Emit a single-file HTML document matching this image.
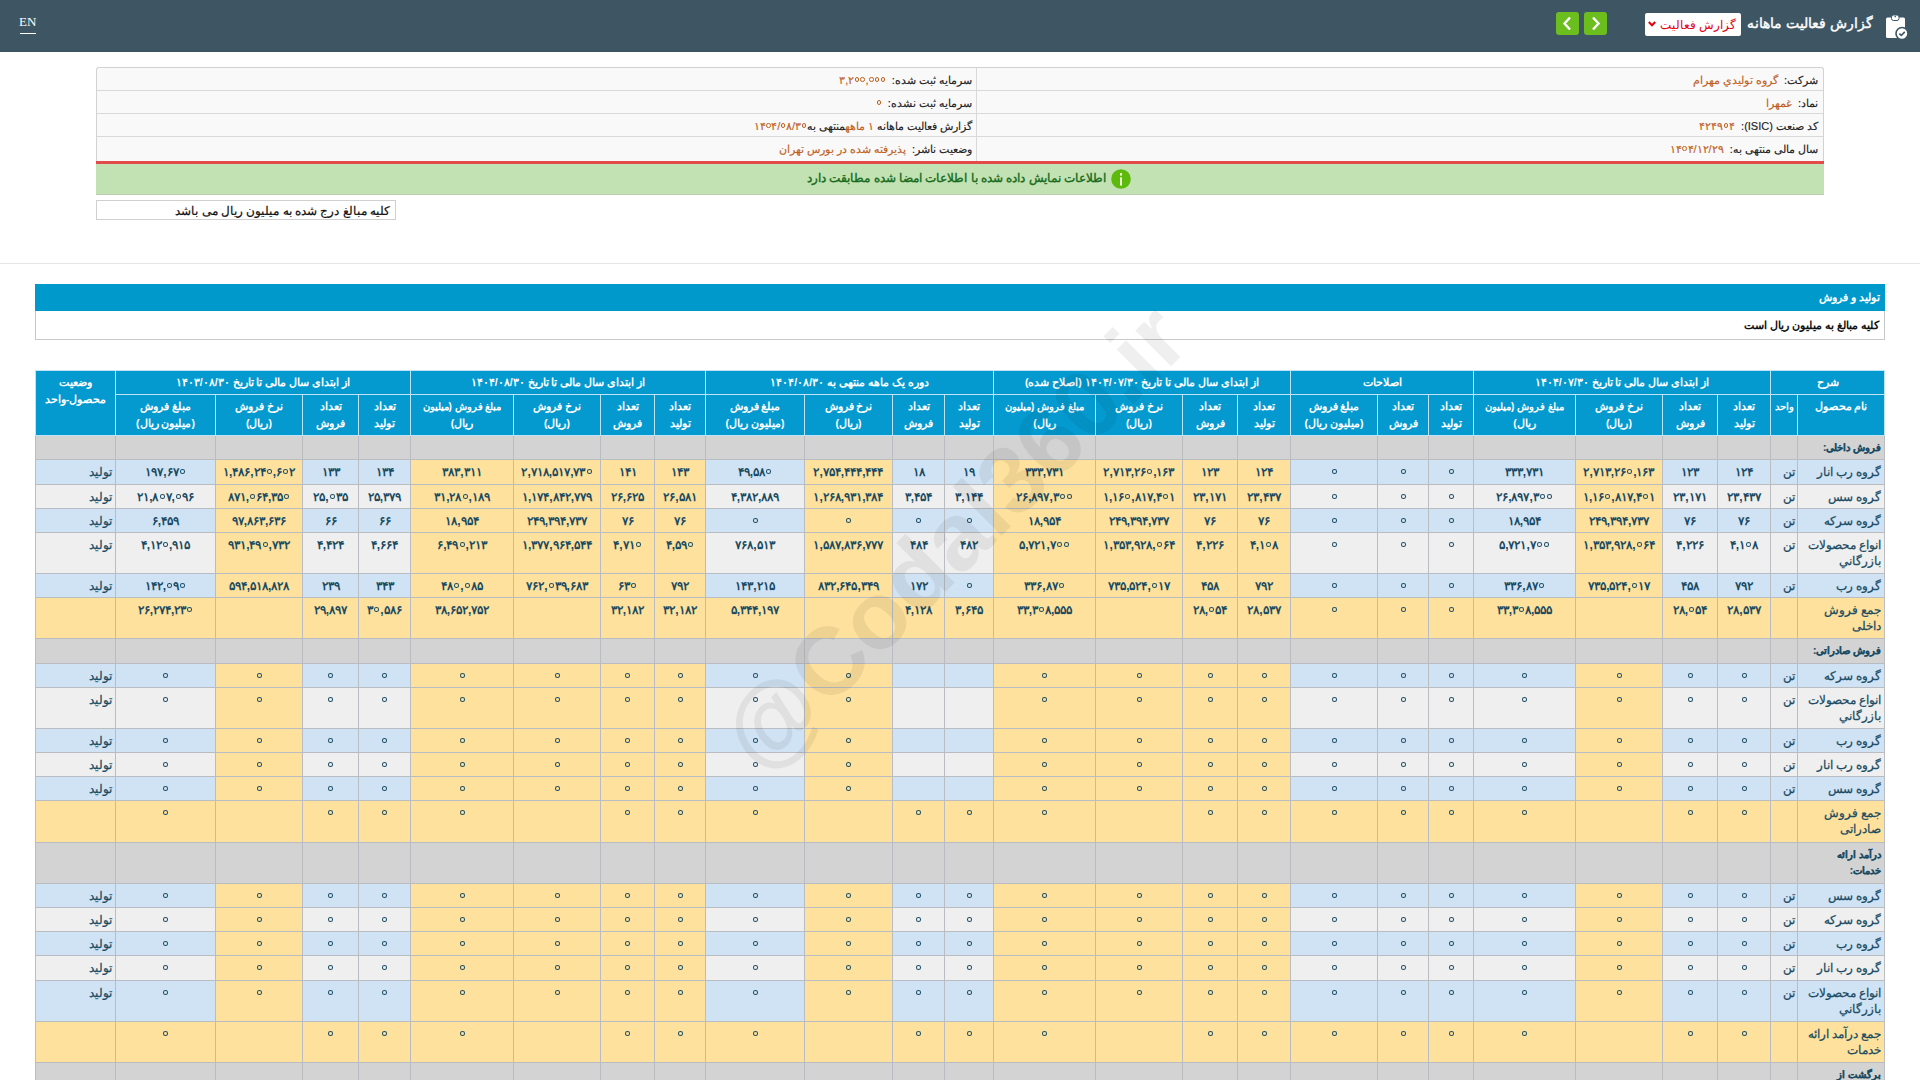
<!DOCTYPE html>
<html lang="fa"><head><meta charset="utf-8"><title>Codal</title>
<style>
*{box-sizing:border-box;margin:0;padding:0}
html,body{width:1920px;height:1080px;overflow:hidden;background:#fff;font-family:"Liberation Sans",sans-serif;}
.a{position:absolute}
.c{position:absolute;overflow:hidden;color:#1a4b62;font-size:12px;line-height:16px;text-align:center;padding-top:4px;white-space:nowrap;direction:rtl}
.c.d{font-weight:bold}
.c.h1{color:#fff;font-weight:bold;font-size:10.5px;padding-top:3px}
.c.h2{color:#fff;font-weight:bold;font-size:10.5px;padding-top:3px;line-height:17px}
.c.nm{text-align:right;padding-right:3px;font-size:11.5px;-webkit-text-stroke:0.25px currentColor}
.c.u{text-align:right;padding-right:2px;font-size:12px;-webkit-text-stroke:0.25px currentColor}
.c.g{font-weight:bold;font-size:10px;-webkit-text-stroke:0.2px currentColor}
.n{direction:ltr;unicode-bidi:isolate;display:inline-block}
.o0{display:inline-block;width:5px;height:4.6px;border:1.5px solid currentColor;border-radius:50%;margin:0 1px;vertical-align:2.5px}
.fa{direction:rtl;white-space:nowrap}
.inf{direction:rtl;text-align:right;font-size:11px;line-height:16px;white-space:nowrap;color:#222;-webkit-text-stroke:0.15px currentColor}
.inf .vl{color:#c0601c}
.inf .lb{color:#222}
.o0.s{width:4.5px;height:4.5px;border-width:1.4px;vertical-align:2.5px;margin:0 0.6px}
.wm{font-family:"Liberation Sans",sans-serif;font-weight:bold;font-size:93px;line-height:110px;color:rgba(0,0,0,0.062);text-align:center;white-space:nowrap;pointer-events:none}
</style></head><body>

<div class="a" style="left:0;top:0;width:1920px;height:52px;background:#3e5664"></div>
<div class="a" style="left:19px;top:14px;font-family:'Liberation Serif',serif;font-size:13px;color:#fff;line-height:16px">EN</div>
<div class="a" style="left:20px;top:33px;width:16px;height:1px;background:#fff"></div>
<svg class="a" style="left:1882px;top:12px" width="30" height="30" viewBox="0 0 30 30">
  <rect x="4" y="5.6" width="19" height="20.5" rx="1.5" fill="#fff"/>
  <rect x="9.5" y="3" width="7.5" height="5.5" rx="2" fill="#fff" stroke="#3e5664" stroke-width="1"/>
  <circle cx="13.2" cy="4.6" r="0.8" fill="#3e5664"/>
  <circle cx="20" cy="21.5" r="6" fill="#fff" stroke="#3e5664" stroke-width="1.6"/>
  <path d="M17.3 21.6 L19.3 23.3 L22.8 19.9" fill="none" stroke="#3e5664" stroke-width="1.6"/>
</svg>
<div class="a fa" style="left:1700px;top:13px;width:173px;text-align:right;color:#fff;font-size:14px;line-height:20px;-webkit-text-stroke:0.4px #fff">گزارش فعالیت ماهانه</div>
<div class="a" style="left:1645px;top:13px;width:96px;height:23px;background:#fff;border-radius:2px"></div>
<div class="a fa" style="left:1660px;top:16px;width:76px;text-align:right;color:#e3000f;font-size:12px;line-height:18px">گزارش فعالیت</div>
<svg class="a" style="left:1647px;top:19px" width="10" height="10" viewBox="0 0 10 10"><path d="M1.8 3 L5 6.3 L8.2 3" fill="none" stroke="#e3000f" stroke-width="2"/></svg>
<div class="a" style="left:1556px;top:12px;width:23px;height:23px;background:#6cbe1f;border-radius:3px"></div>
<div class="a" style="left:1584px;top:12px;width:23px;height:23px;background:#6cbe1f;border-radius:3px"></div>
<svg class="a" style="left:1556px;top:12px" width="23" height="23" viewBox="0 0 23 23"><path d="M14 5.5 L8.5 11.5 L14 17.5" fill="none" stroke="#fff" stroke-width="2.4"/></svg>
<svg class="a" style="left:1584px;top:12px" width="23" height="23" viewBox="0 0 23 23"><path d="M9 5.5 L14.5 11.5 L9 17.5" fill="none" stroke="#fff" stroke-width="2.4"/></svg>

<div class="a" style="left:96px;top:67px;width:1728px;height:95px;background:#f9f9f9;border:1px solid #d2d2d2;border-bottom:none;border-radius:3px 3px 0 0"></div>
<div class="a" style="left:97px;top:90px;width:1726px;height:1px;background:#d9d9d9"></div>
<div class="a" style="left:97px;top:113px;width:1726px;height:1px;background:#d9d9d9"></div>
<div class="a" style="left:97px;top:136px;width:1726px;height:1px;background:#d9d9d9"></div>
<div class="a" style="left:976px;top:68px;width:1px;height:93px;background:#d9d9d9"></div>

<div class="a inf" style="left:980px;top:72px;width:838px"><span class="lb">شرکت:</span>&nbsp; <span class="vl">گروه توليدي مهرام</span></div>
<div class="a inf" style="left:980px;top:95px;width:838px"><span class="lb">نماد:</span>&nbsp; <span class="vl">غمهرا</span></div>
<div class="a inf" style="left:980px;top:118px;width:838px"><span class="lb">کد صنعت (ISIC):</span>&nbsp; <span class="vl n">۴۲۴۹<i class="o0 s"></i>۴</span></div>
<div class="a inf" style="left:980px;top:141px;width:838px"><span class="lb">سال مالی منتهی به:</span>&nbsp; <span class="vl n">۱۴<i class="o0 s"></i>۴/۱۲/۲۹</span></div>
<div class="a inf" style="left:100px;top:72px;width:872px"><span class="lb">سرمایه ثبت شده:</span>&nbsp; <span class="vl n">۳,۲<i class="o0 s"></i><i class="o0 s"></i>,<i class="o0 s"></i><i class="o0 s"></i><i class="o0 s"></i></span></div>
<div class="a inf" style="left:100px;top:95px;width:872px"><span class="lb">سرمایه ثبت نشده:</span>&nbsp; <span class="vl n"><i class="o0 s"></i></span></div>
<div class="a inf" style="left:100px;top:118px;width:872px"><span class="lb">گزارش فعالیت ماهانه <span class="vl">۱ ماهه</span>منتهی به<span class="vl n">۱۴<i class="o0 s"></i>۴/<i class="o0 s"></i>۸/۳<i class="o0 s"></i></span></span></div>
<div class="a inf" style="left:100px;top:141px;width:872px"><span class="lb">وضعیت ناشر:</span>&nbsp; <span class="vl">پذیرفته شده در بورس تهران</span></div>

<div class="a" style="left:96px;top:161px;width:1728px;height:3px;background:#e34a4a"></div>
<div class="a" style="left:96px;top:164px;width:1728px;height:31px;background:#c3e2b4;border-bottom:1px solid #b9cdb3"></div>
<div class="a fa" style="left:700px;top:170px;width:406px;text-align:right;color:#176c1c;font-size:12px;line-height:17px;-webkit-text-stroke:0.4px #176c1c">اطلاعات نمایش داده شده با اطلاعات امضا شده مطابقت دارد</div>
<svg class="a" style="left:1110px;top:168px" width="22" height="22" viewBox="0 0 22 22"><circle cx="11" cy="11" r="9.8" fill="#5db90c"/><rect x="10" y="5" width="2" height="2.6" fill="#eaffd0"/><rect x="10" y="9.3" width="2" height="8.2" fill="#eaffd0"/></svg>

<div class="a" style="left:96px;top:200px;width:300px;height:20px;border:1px solid #d0d0d0;background:#fff"></div>
<div class="a fa" style="left:100px;top:203px;width:290px;text-align:right;color:#111;font-size:12px;line-height:16px;-webkit-text-stroke:0.2px #111">کلیه مبالغ درج شده به میلیون ریال می باشد</div>

<div class="a" style="left:0;top:263px;width:1920px;height:1px;background:#e6e6e6"></div>

<div class="a" style="left:35px;top:284px;width:1850px;height:27px;background:#0099cc"></div>
<div class="a fa" style="left:500px;top:289px;width:1380px;text-align:right;color:#fff;font-size:11px;line-height:17px;font-weight:bold">تولید و فروش</div>
<div class="a" style="left:35px;top:311px;width:1850px;height:29px;border:1px solid #c9c9c9;border-top:none;background:#fff"></div>
<div class="a fa" style="left:500px;top:317px;width:1379px;text-align:right;color:#111;font-size:11px;line-height:17px;font-weight:bold">کلیه مبالغ به میلیون ریال است</div>

<div class="a" style="left:35px;top:370px;width:1850px;height:710px;background:#b9bdc2"></div>
<div class="a" style="left:35px;top:370px;width:1850px;height:66px;background:#bfe3f3"></div>
<div class="c h1" style="left:1771px;top:371px;width:113px;height:23px;background:#049ad0">شرح</div>
<div class="c h1" style="left:1474px;top:371px;width:296px;height:23px;background:#049ad0">از ابتدای سال مالی تا تاریخ ۱۴۰۴/۰۷/۳۰</div>
<div class="c h1" style="left:1291px;top:371px;width:182px;height:23px;background:#049ad0">اصلاحات</div>
<div class="c h1" style="left:994px;top:371px;width:296px;height:23px;background:#049ad0">از ابتدای سال مالی تا تاریخ ۱۴۰۴/۰۷/۳۰ (اصلاح شده)</div>
<div class="c h1" style="left:706px;top:371px;width:287px;height:23px;background:#049ad0">دوره یک ماهه منتهی به ۱۴۰۴/۰۸/۳۰</div>
<div class="c h1" style="left:411px;top:371px;width:294px;height:23px;background:#049ad0">از ابتدای سال مالی تا تاریخ ۱۴۰۴/۰۸/۳۰</div>
<div class="c h1" style="left:116px;top:371px;width:294px;height:23px;background:#049ad0">از ابتدای سال مالی تا تاریخ ۱۴۰۳/۰۸/۳۰</div>
<div class="c h2" style="left:36px;top:371px;width:79px;height:64px;background:#049ad0">وضعیت<br>محصول-واحد</div>
<div class="c h2" style="left:1798px;top:395px;width:86px;height:40px;background:#049ad0">نام محصول</div>
<div class="c h2" style="left:1771px;top:395px;width:26px;height:40px;background:#049ad0"><span style="font-size:10px">واحد</span></div>
<div class="c h2" style="left:1718px;top:395px;width:52px;height:40px;background:#049ad0">تعداد<br>تولید</div>
<div class="c h2" style="left:1663px;top:395px;width:54px;height:40px;background:#049ad0">تعداد<br>فروش</div>
<div class="c h2" style="left:1576px;top:395px;width:86px;height:40px;background:#049ad0">نرخ فروش<br>(ریال)</div>
<div class="c h2" style="left:1474px;top:395px;width:101px;height:40px;background:#049ad0"><span style="font-size:10px">مبلغ فروش (میلیون</span><br>ریال)</div>
<div class="c h2" style="left:1238px;top:395px;width:52px;height:40px;background:#049ad0">تعداد<br>تولید</div>
<div class="c h2" style="left:1183px;top:395px;width:54px;height:40px;background:#049ad0">تعداد<br>فروش</div>
<div class="c h2" style="left:1096px;top:395px;width:86px;height:40px;background:#049ad0">نرخ فروش<br>(ریال)</div>
<div class="c h2" style="left:994px;top:395px;width:101px;height:40px;background:#049ad0"><span style="font-size:10px">مبلغ فروش (میلیون</span><br>ریال)</div>
<div class="c h2" style="left:945px;top:395px;width:48px;height:40px;background:#049ad0">تعداد<br>تولید</div>
<div class="c h2" style="left:893px;top:395px;width:51px;height:40px;background:#049ad0">تعداد<br>فروش</div>
<div class="c h2" style="left:805px;top:395px;width:87px;height:40px;background:#049ad0">نرخ فروش<br>(ریال)</div>
<div class="c h2" style="left:706px;top:395px;width:98px;height:40px;background:#049ad0">مبلغ فروش<br>(میلیون ریال)</div>
<div class="c h2" style="left:655px;top:395px;width:50px;height:40px;background:#049ad0">تعداد<br>تولید</div>
<div class="c h2" style="left:601px;top:395px;width:53px;height:40px;background:#049ad0">تعداد<br>فروش</div>
<div class="c h2" style="left:514px;top:395px;width:86px;height:40px;background:#049ad0">نرخ فروش<br>(ریال)</div>
<div class="c h2" style="left:411px;top:395px;width:102px;height:40px;background:#049ad0"><span style="font-size:10px">مبلغ فروش (میلیون</span><br>ریال)</div>
<div class="c h2" style="left:359px;top:395px;width:51px;height:40px;background:#049ad0">تعداد<br>تولید</div>
<div class="c h2" style="left:303px;top:395px;width:55px;height:40px;background:#049ad0">تعداد<br>فروش</div>
<div class="c h2" style="left:216px;top:395px;width:86px;height:40px;background:#049ad0">نرخ فروش<br>(ریال)</div>
<div class="c h2" style="left:116px;top:395px;width:99px;height:40px;background:#049ad0">مبلغ فروش<br>(میلیون ریال)</div>
<div class="c h2" style="left:1429px;top:395px;width:44px;height:40px;background:#049ad0">تعداد<br>تولید</div>
<div class="c h2" style="left:1378px;top:395px;width:50px;height:40px;background:#049ad0">تعداد<br>فروش</div>
<div class="c h2" style="left:1291px;top:395px;width:86px;height:40px;background:#049ad0">مبلغ فروش<br>(میلیون ریال)</div>
<div class="c " style="left:36px;top:436px;width:79px;height:23px;background:#d3d3d3"></div>
<div class="c " style="left:116px;top:436px;width:99px;height:23px;background:#d3d3d3"></div>
<div class="c " style="left:216px;top:436px;width:86px;height:23px;background:#d3d3d3"></div>
<div class="c " style="left:303px;top:436px;width:55px;height:23px;background:#d3d3d3"></div>
<div class="c " style="left:359px;top:436px;width:51px;height:23px;background:#d3d3d3"></div>
<div class="c " style="left:411px;top:436px;width:102px;height:23px;background:#d3d3d3"></div>
<div class="c " style="left:514px;top:436px;width:86px;height:23px;background:#d3d3d3"></div>
<div class="c " style="left:601px;top:436px;width:53px;height:23px;background:#d3d3d3"></div>
<div class="c " style="left:655px;top:436px;width:50px;height:23px;background:#d3d3d3"></div>
<div class="c " style="left:706px;top:436px;width:98px;height:23px;background:#d3d3d3"></div>
<div class="c " style="left:805px;top:436px;width:87px;height:23px;background:#d3d3d3"></div>
<div class="c " style="left:893px;top:436px;width:51px;height:23px;background:#d3d3d3"></div>
<div class="c " style="left:945px;top:436px;width:48px;height:23px;background:#d3d3d3"></div>
<div class="c " style="left:994px;top:436px;width:101px;height:23px;background:#d3d3d3"></div>
<div class="c " style="left:1096px;top:436px;width:86px;height:23px;background:#d3d3d3"></div>
<div class="c " style="left:1183px;top:436px;width:54px;height:23px;background:#d3d3d3"></div>
<div class="c " style="left:1238px;top:436px;width:52px;height:23px;background:#d3d3d3"></div>
<div class="c " style="left:1291px;top:436px;width:86px;height:23px;background:#d3d3d3"></div>
<div class="c " style="left:1378px;top:436px;width:50px;height:23px;background:#d3d3d3"></div>
<div class="c " style="left:1429px;top:436px;width:44px;height:23px;background:#d3d3d3"></div>
<div class="c " style="left:1474px;top:436px;width:101px;height:23px;background:#d3d3d3"></div>
<div class="c " style="left:1576px;top:436px;width:86px;height:23px;background:#d3d3d3"></div>
<div class="c " style="left:1663px;top:436px;width:54px;height:23px;background:#d3d3d3"></div>
<div class="c " style="left:1718px;top:436px;width:52px;height:23px;background:#d3d3d3"></div>
<div class="c " style="left:1771px;top:436px;width:26px;height:23px;background:#d3d3d3"></div>
<div class="c nm g" style="left:1798px;top:436px;width:86px;height:23px;background:#d3d3d3">فروش داخلی:</div>
<div class="c nm z" style="left:36px;top:460px;width:79px;height:24px;background:#d0e3f5">تولید</div>
<div class="c d" style="left:116px;top:460px;width:99px;height:24px;background:#d0e3f5"><span class="n">۱۹۷,۶۷<i class="o0"></i></span></div>
<div class="c d" style="left:216px;top:460px;width:86px;height:24px;background:#fde19c"><span class="n">۱,۴۸۶,۲۴<i class="o0"></i>,۶<i class="o0"></i>۲</span></div>
<div class="c d" style="left:303px;top:460px;width:55px;height:24px;background:#d0e3f5"><span class="n">۱۳۳</span></div>
<div class="c d" style="left:359px;top:460px;width:51px;height:24px;background:#d0e3f5"><span class="n">۱۳۴</span></div>
<div class="c d" style="left:411px;top:460px;width:102px;height:24px;background:#fde19c"><span class="n">۳۸۳,۳۱۱</span></div>
<div class="c d" style="left:514px;top:460px;width:86px;height:24px;background:#fde19c"><span class="n">۲,۷۱۸,۵۱۷,۷۳<i class="o0"></i></span></div>
<div class="c d" style="left:601px;top:460px;width:53px;height:24px;background:#fde19c"><span class="n">۱۴۱</span></div>
<div class="c d" style="left:655px;top:460px;width:50px;height:24px;background:#fde19c"><span class="n">۱۴۳</span></div>
<div class="c d" style="left:706px;top:460px;width:98px;height:24px;background:#d0e3f5"><span class="n">۴۹,۵۸<i class="o0"></i></span></div>
<div class="c d" style="left:805px;top:460px;width:87px;height:24px;background:#fde19c"><span class="n">۲,۷۵۴,۴۴۴,۴۴۴</span></div>
<div class="c d" style="left:893px;top:460px;width:51px;height:24px;background:#d0e3f5"><span class="n">۱۸</span></div>
<div class="c d" style="left:945px;top:460px;width:48px;height:24px;background:#d0e3f5"><span class="n">۱۹</span></div>
<div class="c d" style="left:994px;top:460px;width:101px;height:24px;background:#fde19c"><span class="n">۳۳۳,۷۳۱</span></div>
<div class="c d" style="left:1096px;top:460px;width:86px;height:24px;background:#fde19c"><span class="n">۲,۷۱۳,۲۶<i class="o0"></i>,۱۶۳</span></div>
<div class="c d" style="left:1183px;top:460px;width:54px;height:24px;background:#fde19c"><span class="n">۱۲۳</span></div>
<div class="c d" style="left:1238px;top:460px;width:52px;height:24px;background:#fde19c"><span class="n">۱۲۴</span></div>
<div class="c d" style="left:1291px;top:460px;width:86px;height:24px;background:#d0e3f5"><span class="n"><i class="o0"></i></span></div>
<div class="c d" style="left:1378px;top:460px;width:50px;height:24px;background:#d0e3f5"><span class="n"><i class="o0"></i></span></div>
<div class="c d" style="left:1429px;top:460px;width:44px;height:24px;background:#d0e3f5"><span class="n"><i class="o0"></i></span></div>
<div class="c d" style="left:1474px;top:460px;width:101px;height:24px;background:#d0e3f5"><span class="n">۳۳۳,۷۳۱</span></div>
<div class="c d" style="left:1576px;top:460px;width:86px;height:24px;background:#fde19c"><span class="n">۲,۷۱۳,۲۶<i class="o0"></i>,۱۶۳</span></div>
<div class="c d" style="left:1663px;top:460px;width:54px;height:24px;background:#d0e3f5"><span class="n">۱۲۳</span></div>
<div class="c d" style="left:1718px;top:460px;width:52px;height:24px;background:#d0e3f5"><span class="n">۱۲۴</span></div>
<div class="c u" style="left:1771px;top:460px;width:26px;height:24px;background:#d0e3f5">تن</div>
<div class="c nm" style="left:1798px;top:460px;width:86px;height:24px;background:#d0e3f5">گروه رب انار</div>
<div class="c nm z" style="left:36px;top:485px;width:79px;height:23px;background:#efefef">تولید</div>
<div class="c d" style="left:116px;top:485px;width:99px;height:23px;background:#efefef"><span class="n">۲۱,۸<i class="o0"></i>۷,<i class="o0"></i>۹۶</span></div>
<div class="c d" style="left:216px;top:485px;width:86px;height:23px;background:#fde19c"><span class="n">۸۷۱,<i class="o0"></i>۶۴,۳۵<i class="o0"></i></span></div>
<div class="c d" style="left:303px;top:485px;width:55px;height:23px;background:#efefef"><span class="n">۲۵,<i class="o0"></i>۳۵</span></div>
<div class="c d" style="left:359px;top:485px;width:51px;height:23px;background:#efefef"><span class="n">۲۵,۳۷۹</span></div>
<div class="c d" style="left:411px;top:485px;width:102px;height:23px;background:#fde19c"><span class="n">۳۱,۲۸<i class="o0"></i>,۱۸۹</span></div>
<div class="c d" style="left:514px;top:485px;width:86px;height:23px;background:#fde19c"><span class="n">۱,۱۷۴,۸۴۲,۷۷۹</span></div>
<div class="c d" style="left:601px;top:485px;width:53px;height:23px;background:#fde19c"><span class="n">۲۶,۶۲۵</span></div>
<div class="c d" style="left:655px;top:485px;width:50px;height:23px;background:#fde19c"><span class="n">۲۶,۵۸۱</span></div>
<div class="c d" style="left:706px;top:485px;width:98px;height:23px;background:#efefef"><span class="n">۴,۳۸۲,۸۸۹</span></div>
<div class="c d" style="left:805px;top:485px;width:87px;height:23px;background:#fde19c"><span class="n">۱,۲۶۸,۹۳۱,۳۸۴</span></div>
<div class="c d" style="left:893px;top:485px;width:51px;height:23px;background:#efefef"><span class="n">۳,۴۵۴</span></div>
<div class="c d" style="left:945px;top:485px;width:48px;height:23px;background:#efefef"><span class="n">۳,۱۴۴</span></div>
<div class="c d" style="left:994px;top:485px;width:101px;height:23px;background:#fde19c"><span class="n">۲۶,۸۹۷,۳<i class="o0"></i><i class="o0"></i></span></div>
<div class="c d" style="left:1096px;top:485px;width:86px;height:23px;background:#fde19c"><span class="n">۱,۱۶<i class="o0"></i>,۸۱۷,۴<i class="o0"></i>۱</span></div>
<div class="c d" style="left:1183px;top:485px;width:54px;height:23px;background:#fde19c"><span class="n">۲۳,۱۷۱</span></div>
<div class="c d" style="left:1238px;top:485px;width:52px;height:23px;background:#fde19c"><span class="n">۲۳,۴۳۷</span></div>
<div class="c d" style="left:1291px;top:485px;width:86px;height:23px;background:#efefef"><span class="n"><i class="o0"></i></span></div>
<div class="c d" style="left:1378px;top:485px;width:50px;height:23px;background:#efefef"><span class="n"><i class="o0"></i></span></div>
<div class="c d" style="left:1429px;top:485px;width:44px;height:23px;background:#efefef"><span class="n"><i class="o0"></i></span></div>
<div class="c d" style="left:1474px;top:485px;width:101px;height:23px;background:#efefef"><span class="n">۲۶,۸۹۷,۳<i class="o0"></i><i class="o0"></i></span></div>
<div class="c d" style="left:1576px;top:485px;width:86px;height:23px;background:#fde19c"><span class="n">۱,۱۶<i class="o0"></i>,۸۱۷,۴<i class="o0"></i>۱</span></div>
<div class="c d" style="left:1663px;top:485px;width:54px;height:23px;background:#efefef"><span class="n">۲۳,۱۷۱</span></div>
<div class="c d" style="left:1718px;top:485px;width:52px;height:23px;background:#efefef"><span class="n">۲۳,۴۳۷</span></div>
<div class="c u" style="left:1771px;top:485px;width:26px;height:23px;background:#efefef">تن</div>
<div class="c nm" style="left:1798px;top:485px;width:86px;height:23px;background:#efefef">گروه سس</div>
<div class="c nm z" style="left:36px;top:509px;width:79px;height:23px;background:#d0e3f5">تولید</div>
<div class="c d" style="left:116px;top:509px;width:99px;height:23px;background:#d0e3f5"><span class="n">۶,۴۵۹</span></div>
<div class="c d" style="left:216px;top:509px;width:86px;height:23px;background:#fde19c"><span class="n">۹۷,۸۶۳,۶۳۶</span></div>
<div class="c d" style="left:303px;top:509px;width:55px;height:23px;background:#d0e3f5"><span class="n">۶۶</span></div>
<div class="c d" style="left:359px;top:509px;width:51px;height:23px;background:#d0e3f5"><span class="n">۶۶</span></div>
<div class="c d" style="left:411px;top:509px;width:102px;height:23px;background:#fde19c"><span class="n">۱۸,۹۵۴</span></div>
<div class="c d" style="left:514px;top:509px;width:86px;height:23px;background:#fde19c"><span class="n">۲۴۹,۳۹۴,۷۳۷</span></div>
<div class="c d" style="left:601px;top:509px;width:53px;height:23px;background:#fde19c"><span class="n">۷۶</span></div>
<div class="c d" style="left:655px;top:509px;width:50px;height:23px;background:#fde19c"><span class="n">۷۶</span></div>
<div class="c d" style="left:706px;top:509px;width:98px;height:23px;background:#d0e3f5"><span class="n"><i class="o0"></i></span></div>
<div class="c d" style="left:805px;top:509px;width:87px;height:23px;background:#fde19c"><span class="n"><i class="o0"></i></span></div>
<div class="c d" style="left:893px;top:509px;width:51px;height:23px;background:#d0e3f5"><span class="n"><i class="o0"></i></span></div>
<div class="c d" style="left:945px;top:509px;width:48px;height:23px;background:#d0e3f5"><span class="n"><i class="o0"></i></span></div>
<div class="c d" style="left:994px;top:509px;width:101px;height:23px;background:#fde19c"><span class="n">۱۸,۹۵۴</span></div>
<div class="c d" style="left:1096px;top:509px;width:86px;height:23px;background:#fde19c"><span class="n">۲۴۹,۳۹۴,۷۳۷</span></div>
<div class="c d" style="left:1183px;top:509px;width:54px;height:23px;background:#fde19c"><span class="n">۷۶</span></div>
<div class="c d" style="left:1238px;top:509px;width:52px;height:23px;background:#fde19c"><span class="n">۷۶</span></div>
<div class="c d" style="left:1291px;top:509px;width:86px;height:23px;background:#d0e3f5"><span class="n"><i class="o0"></i></span></div>
<div class="c d" style="left:1378px;top:509px;width:50px;height:23px;background:#d0e3f5"><span class="n"><i class="o0"></i></span></div>
<div class="c d" style="left:1429px;top:509px;width:44px;height:23px;background:#d0e3f5"><span class="n"><i class="o0"></i></span></div>
<div class="c d" style="left:1474px;top:509px;width:101px;height:23px;background:#d0e3f5"><span class="n">۱۸,۹۵۴</span></div>
<div class="c d" style="left:1576px;top:509px;width:86px;height:23px;background:#fde19c"><span class="n">۲۴۹,۳۹۴,۷۳۷</span></div>
<div class="c d" style="left:1663px;top:509px;width:54px;height:23px;background:#d0e3f5"><span class="n">۷۶</span></div>
<div class="c d" style="left:1718px;top:509px;width:52px;height:23px;background:#d0e3f5"><span class="n">۷۶</span></div>
<div class="c u" style="left:1771px;top:509px;width:26px;height:23px;background:#d0e3f5">تن</div>
<div class="c nm" style="left:1798px;top:509px;width:86px;height:23px;background:#d0e3f5">گروه سرکه</div>
<div class="c nm z" style="left:36px;top:533px;width:79px;height:40px;background:#efefef">تولید</div>
<div class="c d" style="left:116px;top:533px;width:99px;height:40px;background:#efefef"><span class="n">۴,۱۲<i class="o0"></i>,۹۱۵</span></div>
<div class="c d" style="left:216px;top:533px;width:86px;height:40px;background:#fde19c"><span class="n">۹۳۱,۴۹<i class="o0"></i>,۷۳۲</span></div>
<div class="c d" style="left:303px;top:533px;width:55px;height:40px;background:#efefef"><span class="n">۴,۴۲۴</span></div>
<div class="c d" style="left:359px;top:533px;width:51px;height:40px;background:#efefef"><span class="n">۴,۶۶۴</span></div>
<div class="c d" style="left:411px;top:533px;width:102px;height:40px;background:#fde19c"><span class="n">۶,۴۹<i class="o0"></i>,۲۱۳</span></div>
<div class="c d" style="left:514px;top:533px;width:86px;height:40px;background:#fde19c"><span class="n">۱,۳۷۷,۹۶۴,۵۴۴</span></div>
<div class="c d" style="left:601px;top:533px;width:53px;height:40px;background:#fde19c"><span class="n">۴,۷۱<i class="o0"></i></span></div>
<div class="c d" style="left:655px;top:533px;width:50px;height:40px;background:#fde19c"><span class="n">۴,۵۹<i class="o0"></i></span></div>
<div class="c d" style="left:706px;top:533px;width:98px;height:40px;background:#efefef"><span class="n">۷۶۸,۵۱۳</span></div>
<div class="c d" style="left:805px;top:533px;width:87px;height:40px;background:#fde19c"><span class="n">۱,۵۸۷,۸۳۶,۷۷۷</span></div>
<div class="c d" style="left:893px;top:533px;width:51px;height:40px;background:#efefef"><span class="n">۴۸۴</span></div>
<div class="c d" style="left:945px;top:533px;width:48px;height:40px;background:#efefef"><span class="n">۴۸۲</span></div>
<div class="c d" style="left:994px;top:533px;width:101px;height:40px;background:#fde19c"><span class="n">۵,۷۲۱,۷<i class="o0"></i><i class="o0"></i></span></div>
<div class="c d" style="left:1096px;top:533px;width:86px;height:40px;background:#fde19c"><span class="n">۱,۳۵۳,۹۲۸,<i class="o0"></i>۶۴</span></div>
<div class="c d" style="left:1183px;top:533px;width:54px;height:40px;background:#fde19c"><span class="n">۴,۲۲۶</span></div>
<div class="c d" style="left:1238px;top:533px;width:52px;height:40px;background:#fde19c"><span class="n">۴,۱<i class="o0"></i>۸</span></div>
<div class="c d" style="left:1291px;top:533px;width:86px;height:40px;background:#efefef"><span class="n"><i class="o0"></i></span></div>
<div class="c d" style="left:1378px;top:533px;width:50px;height:40px;background:#efefef"><span class="n"><i class="o0"></i></span></div>
<div class="c d" style="left:1429px;top:533px;width:44px;height:40px;background:#efefef"><span class="n"><i class="o0"></i></span></div>
<div class="c d" style="left:1474px;top:533px;width:101px;height:40px;background:#efefef"><span class="n">۵,۷۲۱,۷<i class="o0"></i><i class="o0"></i></span></div>
<div class="c d" style="left:1576px;top:533px;width:86px;height:40px;background:#fde19c"><span class="n">۱,۳۵۳,۹۲۸,<i class="o0"></i>۶۴</span></div>
<div class="c d" style="left:1663px;top:533px;width:54px;height:40px;background:#efefef"><span class="n">۴,۲۲۶</span></div>
<div class="c d" style="left:1718px;top:533px;width:52px;height:40px;background:#efefef"><span class="n">۴,۱<i class="o0"></i>۸</span></div>
<div class="c u" style="left:1771px;top:533px;width:26px;height:40px;background:#efefef">تن</div>
<div class="c nm" style="left:1798px;top:533px;width:86px;height:40px;background:#efefef">انواع محصولات<br>بازرگاني</div>
<div class="c nm z" style="left:36px;top:574px;width:79px;height:23px;background:#d0e3f5">تولید</div>
<div class="c d" style="left:116px;top:574px;width:99px;height:23px;background:#d0e3f5"><span class="n">۱۴۲,<i class="o0"></i>۹<i class="o0"></i></span></div>
<div class="c d" style="left:216px;top:574px;width:86px;height:23px;background:#fde19c"><span class="n">۵۹۴,۵۱۸,۸۲۸</span></div>
<div class="c d" style="left:303px;top:574px;width:55px;height:23px;background:#d0e3f5"><span class="n">۲۳۹</span></div>
<div class="c d" style="left:359px;top:574px;width:51px;height:23px;background:#d0e3f5"><span class="n">۳۴۳</span></div>
<div class="c d" style="left:411px;top:574px;width:102px;height:23px;background:#fde19c"><span class="n">۴۸<i class="o0"></i>,<i class="o0"></i>۸۵</span></div>
<div class="c d" style="left:514px;top:574px;width:86px;height:23px;background:#fde19c"><span class="n">۷۶۲,<i class="o0"></i>۳۹,۶۸۳</span></div>
<div class="c d" style="left:601px;top:574px;width:53px;height:23px;background:#fde19c"><span class="n">۶۳<i class="o0"></i></span></div>
<div class="c d" style="left:655px;top:574px;width:50px;height:23px;background:#fde19c"><span class="n">۷۹۲</span></div>
<div class="c d" style="left:706px;top:574px;width:98px;height:23px;background:#d0e3f5"><span class="n">۱۴۳,۲۱۵</span></div>
<div class="c d" style="left:805px;top:574px;width:87px;height:23px;background:#fde19c"><span class="n">۸۳۲,۶۴۵,۳۴۹</span></div>
<div class="c d" style="left:893px;top:574px;width:51px;height:23px;background:#d0e3f5"><span class="n">۱۷۲</span></div>
<div class="c d" style="left:945px;top:574px;width:48px;height:23px;background:#d0e3f5"><span class="n"><i class="o0"></i></span></div>
<div class="c d" style="left:994px;top:574px;width:101px;height:23px;background:#fde19c"><span class="n">۳۳۶,۸۷<i class="o0"></i></span></div>
<div class="c d" style="left:1096px;top:574px;width:86px;height:23px;background:#fde19c"><span class="n">۷۳۵,۵۲۴,<i class="o0"></i>۱۷</span></div>
<div class="c d" style="left:1183px;top:574px;width:54px;height:23px;background:#fde19c"><span class="n">۴۵۸</span></div>
<div class="c d" style="left:1238px;top:574px;width:52px;height:23px;background:#fde19c"><span class="n">۷۹۲</span></div>
<div class="c d" style="left:1291px;top:574px;width:86px;height:23px;background:#d0e3f5"><span class="n"><i class="o0"></i></span></div>
<div class="c d" style="left:1378px;top:574px;width:50px;height:23px;background:#d0e3f5"><span class="n"><i class="o0"></i></span></div>
<div class="c d" style="left:1429px;top:574px;width:44px;height:23px;background:#d0e3f5"><span class="n"><i class="o0"></i></span></div>
<div class="c d" style="left:1474px;top:574px;width:101px;height:23px;background:#d0e3f5"><span class="n">۳۳۶,۸۷<i class="o0"></i></span></div>
<div class="c d" style="left:1576px;top:574px;width:86px;height:23px;background:#fde19c"><span class="n">۷۳۵,۵۲۴,<i class="o0"></i>۱۷</span></div>
<div class="c d" style="left:1663px;top:574px;width:54px;height:23px;background:#d0e3f5"><span class="n">۴۵۸</span></div>
<div class="c d" style="left:1718px;top:574px;width:52px;height:23px;background:#d0e3f5"><span class="n">۷۹۲</span></div>
<div class="c u" style="left:1771px;top:574px;width:26px;height:23px;background:#d0e3f5">تن</div>
<div class="c nm" style="left:1798px;top:574px;width:86px;height:23px;background:#d0e3f5">گروه رب</div>
<div class="c d" style="left:36px;top:598px;width:79px;height:40px;background:#fde19c"></div>
<div class="c d" style="left:116px;top:598px;width:99px;height:40px;background:#fde19c"><span class="n">۲۶,۲۷۴,۲۳<i class="o0"></i></span></div>
<div class="c d" style="left:216px;top:598px;width:86px;height:40px;background:#fde19c"></div>
<div class="c d" style="left:303px;top:598px;width:55px;height:40px;background:#fde19c"><span class="n">۲۹,۸۹۷</span></div>
<div class="c d" style="left:359px;top:598px;width:51px;height:40px;background:#fde19c"><span class="n">۳<i class="o0"></i>,۵۸۶</span></div>
<div class="c d" style="left:411px;top:598px;width:102px;height:40px;background:#fde19c"><span class="n">۳۸,۶۵۲,۷۵۲</span></div>
<div class="c d" style="left:514px;top:598px;width:86px;height:40px;background:#fde19c"></div>
<div class="c d" style="left:601px;top:598px;width:53px;height:40px;background:#fde19c"><span class="n">۳۲,۱۸۲</span></div>
<div class="c d" style="left:655px;top:598px;width:50px;height:40px;background:#fde19c"><span class="n">۳۲,۱۸۲</span></div>
<div class="c d" style="left:706px;top:598px;width:98px;height:40px;background:#fde19c"><span class="n">۵,۳۴۴,۱۹۷</span></div>
<div class="c d" style="left:805px;top:598px;width:87px;height:40px;background:#fde19c"></div>
<div class="c d" style="left:893px;top:598px;width:51px;height:40px;background:#fde19c"><span class="n">۴,۱۲۸</span></div>
<div class="c d" style="left:945px;top:598px;width:48px;height:40px;background:#fde19c"><span class="n">۳,۶۴۵</span></div>
<div class="c d" style="left:994px;top:598px;width:101px;height:40px;background:#fde19c"><span class="n">۳۳,۳<i class="o0"></i>۸,۵۵۵</span></div>
<div class="c d" style="left:1096px;top:598px;width:86px;height:40px;background:#fde19c"></div>
<div class="c d" style="left:1183px;top:598px;width:54px;height:40px;background:#fde19c"><span class="n">۲۸,<i class="o0"></i>۵۴</span></div>
<div class="c d" style="left:1238px;top:598px;width:52px;height:40px;background:#fde19c"><span class="n">۲۸,۵۳۷</span></div>
<div class="c d" style="left:1291px;top:598px;width:86px;height:40px;background:#fde19c"><span class="n"><i class="o0"></i></span></div>
<div class="c d" style="left:1378px;top:598px;width:50px;height:40px;background:#fde19c"><span class="n"><i class="o0"></i></span></div>
<div class="c d" style="left:1429px;top:598px;width:44px;height:40px;background:#fde19c"><span class="n"><i class="o0"></i></span></div>
<div class="c d" style="left:1474px;top:598px;width:101px;height:40px;background:#fde19c"><span class="n">۳۳,۳<i class="o0"></i>۸,۵۵۵</span></div>
<div class="c d" style="left:1576px;top:598px;width:86px;height:40px;background:#fde19c"></div>
<div class="c d" style="left:1663px;top:598px;width:54px;height:40px;background:#fde19c"><span class="n">۲۸,<i class="o0"></i>۵۴</span></div>
<div class="c d" style="left:1718px;top:598px;width:52px;height:40px;background:#fde19c"><span class="n">۲۸,۵۳۷</span></div>
<div class="c d" style="left:1771px;top:598px;width:26px;height:40px;background:#fde19c"></div>
<div class="c nm" style="left:1798px;top:598px;width:86px;height:40px;background:#fde19c">جمع فروش<br>داخلی</div>
<div class="c " style="left:36px;top:639px;width:79px;height:24px;background:#d3d3d3"></div>
<div class="c " style="left:116px;top:639px;width:99px;height:24px;background:#d3d3d3"></div>
<div class="c " style="left:216px;top:639px;width:86px;height:24px;background:#d3d3d3"></div>
<div class="c " style="left:303px;top:639px;width:55px;height:24px;background:#d3d3d3"></div>
<div class="c " style="left:359px;top:639px;width:51px;height:24px;background:#d3d3d3"></div>
<div class="c " style="left:411px;top:639px;width:102px;height:24px;background:#d3d3d3"></div>
<div class="c " style="left:514px;top:639px;width:86px;height:24px;background:#d3d3d3"></div>
<div class="c " style="left:601px;top:639px;width:53px;height:24px;background:#d3d3d3"></div>
<div class="c " style="left:655px;top:639px;width:50px;height:24px;background:#d3d3d3"></div>
<div class="c " style="left:706px;top:639px;width:98px;height:24px;background:#d3d3d3"></div>
<div class="c " style="left:805px;top:639px;width:87px;height:24px;background:#d3d3d3"></div>
<div class="c " style="left:893px;top:639px;width:51px;height:24px;background:#d3d3d3"></div>
<div class="c " style="left:945px;top:639px;width:48px;height:24px;background:#d3d3d3"></div>
<div class="c " style="left:994px;top:639px;width:101px;height:24px;background:#d3d3d3"></div>
<div class="c " style="left:1096px;top:639px;width:86px;height:24px;background:#d3d3d3"></div>
<div class="c " style="left:1183px;top:639px;width:54px;height:24px;background:#d3d3d3"></div>
<div class="c " style="left:1238px;top:639px;width:52px;height:24px;background:#d3d3d3"></div>
<div class="c " style="left:1291px;top:639px;width:86px;height:24px;background:#d3d3d3"></div>
<div class="c " style="left:1378px;top:639px;width:50px;height:24px;background:#d3d3d3"></div>
<div class="c " style="left:1429px;top:639px;width:44px;height:24px;background:#d3d3d3"></div>
<div class="c " style="left:1474px;top:639px;width:101px;height:24px;background:#d3d3d3"></div>
<div class="c " style="left:1576px;top:639px;width:86px;height:24px;background:#d3d3d3"></div>
<div class="c " style="left:1663px;top:639px;width:54px;height:24px;background:#d3d3d3"></div>
<div class="c " style="left:1718px;top:639px;width:52px;height:24px;background:#d3d3d3"></div>
<div class="c " style="left:1771px;top:639px;width:26px;height:24px;background:#d3d3d3"></div>
<div class="c nm g" style="left:1798px;top:639px;width:86px;height:24px;background:#d3d3d3">فروش صادراتی:</div>
<div class="c nm z" style="left:36px;top:664px;width:79px;height:23px;background:#d0e3f5">تولید</div>
<div class="c d" style="left:116px;top:664px;width:99px;height:23px;background:#d0e3f5"><span class="n"><i class="o0"></i></span></div>
<div class="c d" style="left:216px;top:664px;width:86px;height:23px;background:#fde19c"><span class="n"><i class="o0"></i></span></div>
<div class="c d" style="left:303px;top:664px;width:55px;height:23px;background:#d0e3f5"><span class="n"><i class="o0"></i></span></div>
<div class="c d" style="left:359px;top:664px;width:51px;height:23px;background:#d0e3f5"><span class="n"><i class="o0"></i></span></div>
<div class="c d" style="left:411px;top:664px;width:102px;height:23px;background:#fde19c"><span class="n"><i class="o0"></i></span></div>
<div class="c d" style="left:514px;top:664px;width:86px;height:23px;background:#fde19c"><span class="n"><i class="o0"></i></span></div>
<div class="c d" style="left:601px;top:664px;width:53px;height:23px;background:#fde19c"><span class="n"><i class="o0"></i></span></div>
<div class="c d" style="left:655px;top:664px;width:50px;height:23px;background:#fde19c"><span class="n"><i class="o0"></i></span></div>
<div class="c d" style="left:706px;top:664px;width:98px;height:23px;background:#d0e3f5"><span class="n"><i class="o0"></i></span></div>
<div class="c d" style="left:805px;top:664px;width:87px;height:23px;background:#fde19c"><span class="n"><i class="o0"></i></span></div>
<div class="c d" style="left:893px;top:664px;width:51px;height:23px;background:#d0e3f5"></div>
<div class="c d" style="left:945px;top:664px;width:48px;height:23px;background:#d0e3f5"></div>
<div class="c d" style="left:994px;top:664px;width:101px;height:23px;background:#fde19c"><span class="n"><i class="o0"></i></span></div>
<div class="c d" style="left:1096px;top:664px;width:86px;height:23px;background:#fde19c"><span class="n"><i class="o0"></i></span></div>
<div class="c d" style="left:1183px;top:664px;width:54px;height:23px;background:#fde19c"><span class="n"><i class="o0"></i></span></div>
<div class="c d" style="left:1238px;top:664px;width:52px;height:23px;background:#fde19c"><span class="n"><i class="o0"></i></span></div>
<div class="c d" style="left:1291px;top:664px;width:86px;height:23px;background:#d0e3f5"><span class="n"><i class="o0"></i></span></div>
<div class="c d" style="left:1378px;top:664px;width:50px;height:23px;background:#d0e3f5"><span class="n"><i class="o0"></i></span></div>
<div class="c d" style="left:1429px;top:664px;width:44px;height:23px;background:#d0e3f5"><span class="n"><i class="o0"></i></span></div>
<div class="c d" style="left:1474px;top:664px;width:101px;height:23px;background:#d0e3f5"><span class="n"><i class="o0"></i></span></div>
<div class="c d" style="left:1576px;top:664px;width:86px;height:23px;background:#fde19c"><span class="n"><i class="o0"></i></span></div>
<div class="c d" style="left:1663px;top:664px;width:54px;height:23px;background:#d0e3f5"><span class="n"><i class="o0"></i></span></div>
<div class="c d" style="left:1718px;top:664px;width:52px;height:23px;background:#d0e3f5"><span class="n"><i class="o0"></i></span></div>
<div class="c u" style="left:1771px;top:664px;width:26px;height:23px;background:#d0e3f5">تن</div>
<div class="c nm" style="left:1798px;top:664px;width:86px;height:23px;background:#d0e3f5">گروه سرکه</div>
<div class="c nm z" style="left:36px;top:688px;width:79px;height:40px;background:#efefef">تولید</div>
<div class="c d" style="left:116px;top:688px;width:99px;height:40px;background:#efefef"><span class="n"><i class="o0"></i></span></div>
<div class="c d" style="left:216px;top:688px;width:86px;height:40px;background:#fde19c"><span class="n"><i class="o0"></i></span></div>
<div class="c d" style="left:303px;top:688px;width:55px;height:40px;background:#efefef"><span class="n"><i class="o0"></i></span></div>
<div class="c d" style="left:359px;top:688px;width:51px;height:40px;background:#efefef"><span class="n"><i class="o0"></i></span></div>
<div class="c d" style="left:411px;top:688px;width:102px;height:40px;background:#fde19c"><span class="n"><i class="o0"></i></span></div>
<div class="c d" style="left:514px;top:688px;width:86px;height:40px;background:#fde19c"><span class="n"><i class="o0"></i></span></div>
<div class="c d" style="left:601px;top:688px;width:53px;height:40px;background:#fde19c"><span class="n"><i class="o0"></i></span></div>
<div class="c d" style="left:655px;top:688px;width:50px;height:40px;background:#fde19c"><span class="n"><i class="o0"></i></span></div>
<div class="c d" style="left:706px;top:688px;width:98px;height:40px;background:#efefef"><span class="n"><i class="o0"></i></span></div>
<div class="c d" style="left:805px;top:688px;width:87px;height:40px;background:#fde19c"><span class="n"><i class="o0"></i></span></div>
<div class="c d" style="left:893px;top:688px;width:51px;height:40px;background:#efefef"></div>
<div class="c d" style="left:945px;top:688px;width:48px;height:40px;background:#efefef"></div>
<div class="c d" style="left:994px;top:688px;width:101px;height:40px;background:#fde19c"><span class="n"><i class="o0"></i></span></div>
<div class="c d" style="left:1096px;top:688px;width:86px;height:40px;background:#fde19c"><span class="n"><i class="o0"></i></span></div>
<div class="c d" style="left:1183px;top:688px;width:54px;height:40px;background:#fde19c"><span class="n"><i class="o0"></i></span></div>
<div class="c d" style="left:1238px;top:688px;width:52px;height:40px;background:#fde19c"><span class="n"><i class="o0"></i></span></div>
<div class="c d" style="left:1291px;top:688px;width:86px;height:40px;background:#efefef"><span class="n"><i class="o0"></i></span></div>
<div class="c d" style="left:1378px;top:688px;width:50px;height:40px;background:#efefef"><span class="n"><i class="o0"></i></span></div>
<div class="c d" style="left:1429px;top:688px;width:44px;height:40px;background:#efefef"><span class="n"><i class="o0"></i></span></div>
<div class="c d" style="left:1474px;top:688px;width:101px;height:40px;background:#efefef"><span class="n"><i class="o0"></i></span></div>
<div class="c d" style="left:1576px;top:688px;width:86px;height:40px;background:#fde19c"><span class="n"><i class="o0"></i></span></div>
<div class="c d" style="left:1663px;top:688px;width:54px;height:40px;background:#efefef"><span class="n"><i class="o0"></i></span></div>
<div class="c d" style="left:1718px;top:688px;width:52px;height:40px;background:#efefef"><span class="n"><i class="o0"></i></span></div>
<div class="c u" style="left:1771px;top:688px;width:26px;height:40px;background:#efefef">تن</div>
<div class="c nm" style="left:1798px;top:688px;width:86px;height:40px;background:#efefef">انواع محصولات<br>بازرگاني</div>
<div class="c nm z" style="left:36px;top:729px;width:79px;height:23px;background:#d0e3f5">تولید</div>
<div class="c d" style="left:116px;top:729px;width:99px;height:23px;background:#d0e3f5"><span class="n"><i class="o0"></i></span></div>
<div class="c d" style="left:216px;top:729px;width:86px;height:23px;background:#fde19c"><span class="n"><i class="o0"></i></span></div>
<div class="c d" style="left:303px;top:729px;width:55px;height:23px;background:#d0e3f5"><span class="n"><i class="o0"></i></span></div>
<div class="c d" style="left:359px;top:729px;width:51px;height:23px;background:#d0e3f5"><span class="n"><i class="o0"></i></span></div>
<div class="c d" style="left:411px;top:729px;width:102px;height:23px;background:#fde19c"><span class="n"><i class="o0"></i></span></div>
<div class="c d" style="left:514px;top:729px;width:86px;height:23px;background:#fde19c"><span class="n"><i class="o0"></i></span></div>
<div class="c d" style="left:601px;top:729px;width:53px;height:23px;background:#fde19c"><span class="n"><i class="o0"></i></span></div>
<div class="c d" style="left:655px;top:729px;width:50px;height:23px;background:#fde19c"><span class="n"><i class="o0"></i></span></div>
<div class="c d" style="left:706px;top:729px;width:98px;height:23px;background:#d0e3f5"><span class="n"><i class="o0"></i></span></div>
<div class="c d" style="left:805px;top:729px;width:87px;height:23px;background:#fde19c"><span class="n"><i class="o0"></i></span></div>
<div class="c d" style="left:893px;top:729px;width:51px;height:23px;background:#d0e3f5"></div>
<div class="c d" style="left:945px;top:729px;width:48px;height:23px;background:#d0e3f5"></div>
<div class="c d" style="left:994px;top:729px;width:101px;height:23px;background:#fde19c"><span class="n"><i class="o0"></i></span></div>
<div class="c d" style="left:1096px;top:729px;width:86px;height:23px;background:#fde19c"><span class="n"><i class="o0"></i></span></div>
<div class="c d" style="left:1183px;top:729px;width:54px;height:23px;background:#fde19c"><span class="n"><i class="o0"></i></span></div>
<div class="c d" style="left:1238px;top:729px;width:52px;height:23px;background:#fde19c"><span class="n"><i class="o0"></i></span></div>
<div class="c d" style="left:1291px;top:729px;width:86px;height:23px;background:#d0e3f5"><span class="n"><i class="o0"></i></span></div>
<div class="c d" style="left:1378px;top:729px;width:50px;height:23px;background:#d0e3f5"><span class="n"><i class="o0"></i></span></div>
<div class="c d" style="left:1429px;top:729px;width:44px;height:23px;background:#d0e3f5"><span class="n"><i class="o0"></i></span></div>
<div class="c d" style="left:1474px;top:729px;width:101px;height:23px;background:#d0e3f5"><span class="n"><i class="o0"></i></span></div>
<div class="c d" style="left:1576px;top:729px;width:86px;height:23px;background:#fde19c"><span class="n"><i class="o0"></i></span></div>
<div class="c d" style="left:1663px;top:729px;width:54px;height:23px;background:#d0e3f5"><span class="n"><i class="o0"></i></span></div>
<div class="c d" style="left:1718px;top:729px;width:52px;height:23px;background:#d0e3f5"><span class="n"><i class="o0"></i></span></div>
<div class="c u" style="left:1771px;top:729px;width:26px;height:23px;background:#d0e3f5">تن</div>
<div class="c nm" style="left:1798px;top:729px;width:86px;height:23px;background:#d0e3f5">گروه رب</div>
<div class="c nm z" style="left:36px;top:753px;width:79px;height:23px;background:#efefef">تولید</div>
<div class="c d" style="left:116px;top:753px;width:99px;height:23px;background:#efefef"><span class="n"><i class="o0"></i></span></div>
<div class="c d" style="left:216px;top:753px;width:86px;height:23px;background:#fde19c"><span class="n"><i class="o0"></i></span></div>
<div class="c d" style="left:303px;top:753px;width:55px;height:23px;background:#efefef"><span class="n"><i class="o0"></i></span></div>
<div class="c d" style="left:359px;top:753px;width:51px;height:23px;background:#efefef"><span class="n"><i class="o0"></i></span></div>
<div class="c d" style="left:411px;top:753px;width:102px;height:23px;background:#fde19c"><span class="n"><i class="o0"></i></span></div>
<div class="c d" style="left:514px;top:753px;width:86px;height:23px;background:#fde19c"><span class="n"><i class="o0"></i></span></div>
<div class="c d" style="left:601px;top:753px;width:53px;height:23px;background:#fde19c"><span class="n"><i class="o0"></i></span></div>
<div class="c d" style="left:655px;top:753px;width:50px;height:23px;background:#fde19c"><span class="n"><i class="o0"></i></span></div>
<div class="c d" style="left:706px;top:753px;width:98px;height:23px;background:#efefef"><span class="n"><i class="o0"></i></span></div>
<div class="c d" style="left:805px;top:753px;width:87px;height:23px;background:#fde19c"><span class="n"><i class="o0"></i></span></div>
<div class="c d" style="left:893px;top:753px;width:51px;height:23px;background:#efefef"></div>
<div class="c d" style="left:945px;top:753px;width:48px;height:23px;background:#efefef"></div>
<div class="c d" style="left:994px;top:753px;width:101px;height:23px;background:#fde19c"><span class="n"><i class="o0"></i></span></div>
<div class="c d" style="left:1096px;top:753px;width:86px;height:23px;background:#fde19c"><span class="n"><i class="o0"></i></span></div>
<div class="c d" style="left:1183px;top:753px;width:54px;height:23px;background:#fde19c"><span class="n"><i class="o0"></i></span></div>
<div class="c d" style="left:1238px;top:753px;width:52px;height:23px;background:#fde19c"><span class="n"><i class="o0"></i></span></div>
<div class="c d" style="left:1291px;top:753px;width:86px;height:23px;background:#efefef"><span class="n"><i class="o0"></i></span></div>
<div class="c d" style="left:1378px;top:753px;width:50px;height:23px;background:#efefef"><span class="n"><i class="o0"></i></span></div>
<div class="c d" style="left:1429px;top:753px;width:44px;height:23px;background:#efefef"><span class="n"><i class="o0"></i></span></div>
<div class="c d" style="left:1474px;top:753px;width:101px;height:23px;background:#efefef"><span class="n"><i class="o0"></i></span></div>
<div class="c d" style="left:1576px;top:753px;width:86px;height:23px;background:#fde19c"><span class="n"><i class="o0"></i></span></div>
<div class="c d" style="left:1663px;top:753px;width:54px;height:23px;background:#efefef"><span class="n"><i class="o0"></i></span></div>
<div class="c d" style="left:1718px;top:753px;width:52px;height:23px;background:#efefef"><span class="n"><i class="o0"></i></span></div>
<div class="c u" style="left:1771px;top:753px;width:26px;height:23px;background:#efefef">تن</div>
<div class="c nm" style="left:1798px;top:753px;width:86px;height:23px;background:#efefef">گروه رب انار</div>
<div class="c nm z" style="left:36px;top:777px;width:79px;height:23px;background:#d0e3f5">تولید</div>
<div class="c d" style="left:116px;top:777px;width:99px;height:23px;background:#d0e3f5"><span class="n"><i class="o0"></i></span></div>
<div class="c d" style="left:216px;top:777px;width:86px;height:23px;background:#fde19c"><span class="n"><i class="o0"></i></span></div>
<div class="c d" style="left:303px;top:777px;width:55px;height:23px;background:#d0e3f5"><span class="n"><i class="o0"></i></span></div>
<div class="c d" style="left:359px;top:777px;width:51px;height:23px;background:#d0e3f5"><span class="n"><i class="o0"></i></span></div>
<div class="c d" style="left:411px;top:777px;width:102px;height:23px;background:#fde19c"><span class="n"><i class="o0"></i></span></div>
<div class="c d" style="left:514px;top:777px;width:86px;height:23px;background:#fde19c"><span class="n"><i class="o0"></i></span></div>
<div class="c d" style="left:601px;top:777px;width:53px;height:23px;background:#fde19c"><span class="n"><i class="o0"></i></span></div>
<div class="c d" style="left:655px;top:777px;width:50px;height:23px;background:#fde19c"><span class="n"><i class="o0"></i></span></div>
<div class="c d" style="left:706px;top:777px;width:98px;height:23px;background:#d0e3f5"><span class="n"><i class="o0"></i></span></div>
<div class="c d" style="left:805px;top:777px;width:87px;height:23px;background:#fde19c"><span class="n"><i class="o0"></i></span></div>
<div class="c d" style="left:893px;top:777px;width:51px;height:23px;background:#d0e3f5"></div>
<div class="c d" style="left:945px;top:777px;width:48px;height:23px;background:#d0e3f5"></div>
<div class="c d" style="left:994px;top:777px;width:101px;height:23px;background:#fde19c"><span class="n"><i class="o0"></i></span></div>
<div class="c d" style="left:1096px;top:777px;width:86px;height:23px;background:#fde19c"><span class="n"><i class="o0"></i></span></div>
<div class="c d" style="left:1183px;top:777px;width:54px;height:23px;background:#fde19c"><span class="n"><i class="o0"></i></span></div>
<div class="c d" style="left:1238px;top:777px;width:52px;height:23px;background:#fde19c"><span class="n"><i class="o0"></i></span></div>
<div class="c d" style="left:1291px;top:777px;width:86px;height:23px;background:#d0e3f5"><span class="n"><i class="o0"></i></span></div>
<div class="c d" style="left:1378px;top:777px;width:50px;height:23px;background:#d0e3f5"><span class="n"><i class="o0"></i></span></div>
<div class="c d" style="left:1429px;top:777px;width:44px;height:23px;background:#d0e3f5"><span class="n"><i class="o0"></i></span></div>
<div class="c d" style="left:1474px;top:777px;width:101px;height:23px;background:#d0e3f5"><span class="n"><i class="o0"></i></span></div>
<div class="c d" style="left:1576px;top:777px;width:86px;height:23px;background:#fde19c"><span class="n"><i class="o0"></i></span></div>
<div class="c d" style="left:1663px;top:777px;width:54px;height:23px;background:#d0e3f5"><span class="n"><i class="o0"></i></span></div>
<div class="c d" style="left:1718px;top:777px;width:52px;height:23px;background:#d0e3f5"><span class="n"><i class="o0"></i></span></div>
<div class="c u" style="left:1771px;top:777px;width:26px;height:23px;background:#d0e3f5">تن</div>
<div class="c nm" style="left:1798px;top:777px;width:86px;height:23px;background:#d0e3f5">گروه سس</div>
<div class="c d" style="left:36px;top:801px;width:79px;height:41px;background:#fde19c"></div>
<div class="c d" style="left:116px;top:801px;width:99px;height:41px;background:#fde19c"><span class="n"><i class="o0"></i></span></div>
<div class="c d" style="left:216px;top:801px;width:86px;height:41px;background:#fde19c"></div>
<div class="c d" style="left:303px;top:801px;width:55px;height:41px;background:#fde19c"><span class="n"><i class="o0"></i></span></div>
<div class="c d" style="left:359px;top:801px;width:51px;height:41px;background:#fde19c"><span class="n"><i class="o0"></i></span></div>
<div class="c d" style="left:411px;top:801px;width:102px;height:41px;background:#fde19c"><span class="n"><i class="o0"></i></span></div>
<div class="c d" style="left:514px;top:801px;width:86px;height:41px;background:#fde19c"></div>
<div class="c d" style="left:601px;top:801px;width:53px;height:41px;background:#fde19c"><span class="n"><i class="o0"></i></span></div>
<div class="c d" style="left:655px;top:801px;width:50px;height:41px;background:#fde19c"><span class="n"><i class="o0"></i></span></div>
<div class="c d" style="left:706px;top:801px;width:98px;height:41px;background:#fde19c"><span class="n"><i class="o0"></i></span></div>
<div class="c d" style="left:805px;top:801px;width:87px;height:41px;background:#fde19c"></div>
<div class="c d" style="left:893px;top:801px;width:51px;height:41px;background:#fde19c"><span class="n"><i class="o0"></i></span></div>
<div class="c d" style="left:945px;top:801px;width:48px;height:41px;background:#fde19c"><span class="n"><i class="o0"></i></span></div>
<div class="c d" style="left:994px;top:801px;width:101px;height:41px;background:#fde19c"><span class="n"><i class="o0"></i></span></div>
<div class="c d" style="left:1096px;top:801px;width:86px;height:41px;background:#fde19c"></div>
<div class="c d" style="left:1183px;top:801px;width:54px;height:41px;background:#fde19c"><span class="n"><i class="o0"></i></span></div>
<div class="c d" style="left:1238px;top:801px;width:52px;height:41px;background:#fde19c"><span class="n"><i class="o0"></i></span></div>
<div class="c d" style="left:1291px;top:801px;width:86px;height:41px;background:#fde19c"><span class="n"><i class="o0"></i></span></div>
<div class="c d" style="left:1378px;top:801px;width:50px;height:41px;background:#fde19c"><span class="n"><i class="o0"></i></span></div>
<div class="c d" style="left:1429px;top:801px;width:44px;height:41px;background:#fde19c"><span class="n"><i class="o0"></i></span></div>
<div class="c d" style="left:1474px;top:801px;width:101px;height:41px;background:#fde19c"><span class="n"><i class="o0"></i></span></div>
<div class="c d" style="left:1576px;top:801px;width:86px;height:41px;background:#fde19c"></div>
<div class="c d" style="left:1663px;top:801px;width:54px;height:41px;background:#fde19c"><span class="n"><i class="o0"></i></span></div>
<div class="c d" style="left:1718px;top:801px;width:52px;height:41px;background:#fde19c"><span class="n"><i class="o0"></i></span></div>
<div class="c d" style="left:1771px;top:801px;width:26px;height:41px;background:#fde19c"></div>
<div class="c nm" style="left:1798px;top:801px;width:86px;height:41px;background:#fde19c">جمع فروش<br>صادراتی</div>
<div class="c " style="left:36px;top:843px;width:79px;height:40px;background:#d3d3d3"></div>
<div class="c " style="left:116px;top:843px;width:99px;height:40px;background:#d3d3d3"></div>
<div class="c " style="left:216px;top:843px;width:86px;height:40px;background:#d3d3d3"></div>
<div class="c " style="left:303px;top:843px;width:55px;height:40px;background:#d3d3d3"></div>
<div class="c " style="left:359px;top:843px;width:51px;height:40px;background:#d3d3d3"></div>
<div class="c " style="left:411px;top:843px;width:102px;height:40px;background:#d3d3d3"></div>
<div class="c " style="left:514px;top:843px;width:86px;height:40px;background:#d3d3d3"></div>
<div class="c " style="left:601px;top:843px;width:53px;height:40px;background:#d3d3d3"></div>
<div class="c " style="left:655px;top:843px;width:50px;height:40px;background:#d3d3d3"></div>
<div class="c " style="left:706px;top:843px;width:98px;height:40px;background:#d3d3d3"></div>
<div class="c " style="left:805px;top:843px;width:87px;height:40px;background:#d3d3d3"></div>
<div class="c " style="left:893px;top:843px;width:51px;height:40px;background:#d3d3d3"></div>
<div class="c " style="left:945px;top:843px;width:48px;height:40px;background:#d3d3d3"></div>
<div class="c " style="left:994px;top:843px;width:101px;height:40px;background:#d3d3d3"></div>
<div class="c " style="left:1096px;top:843px;width:86px;height:40px;background:#d3d3d3"></div>
<div class="c " style="left:1183px;top:843px;width:54px;height:40px;background:#d3d3d3"></div>
<div class="c " style="left:1238px;top:843px;width:52px;height:40px;background:#d3d3d3"></div>
<div class="c " style="left:1291px;top:843px;width:86px;height:40px;background:#d3d3d3"></div>
<div class="c " style="left:1378px;top:843px;width:50px;height:40px;background:#d3d3d3"></div>
<div class="c " style="left:1429px;top:843px;width:44px;height:40px;background:#d3d3d3"></div>
<div class="c " style="left:1474px;top:843px;width:101px;height:40px;background:#d3d3d3"></div>
<div class="c " style="left:1576px;top:843px;width:86px;height:40px;background:#d3d3d3"></div>
<div class="c " style="left:1663px;top:843px;width:54px;height:40px;background:#d3d3d3"></div>
<div class="c " style="left:1718px;top:843px;width:52px;height:40px;background:#d3d3d3"></div>
<div class="c " style="left:1771px;top:843px;width:26px;height:40px;background:#d3d3d3"></div>
<div class="c nm g" style="left:1798px;top:843px;width:86px;height:40px;background:#d3d3d3">درآمد ارائه<br>خدمات:</div>
<div class="c nm z" style="left:36px;top:884px;width:79px;height:23px;background:#d0e3f5">تولید</div>
<div class="c d" style="left:116px;top:884px;width:99px;height:23px;background:#d0e3f5"><span class="n"><i class="o0"></i></span></div>
<div class="c d" style="left:216px;top:884px;width:86px;height:23px;background:#fde19c"><span class="n"><i class="o0"></i></span></div>
<div class="c d" style="left:303px;top:884px;width:55px;height:23px;background:#d0e3f5"><span class="n"><i class="o0"></i></span></div>
<div class="c d" style="left:359px;top:884px;width:51px;height:23px;background:#d0e3f5"><span class="n"><i class="o0"></i></span></div>
<div class="c d" style="left:411px;top:884px;width:102px;height:23px;background:#fde19c"><span class="n"><i class="o0"></i></span></div>
<div class="c d" style="left:514px;top:884px;width:86px;height:23px;background:#fde19c"><span class="n"><i class="o0"></i></span></div>
<div class="c d" style="left:601px;top:884px;width:53px;height:23px;background:#fde19c"><span class="n"><i class="o0"></i></span></div>
<div class="c d" style="left:655px;top:884px;width:50px;height:23px;background:#fde19c"><span class="n"><i class="o0"></i></span></div>
<div class="c d" style="left:706px;top:884px;width:98px;height:23px;background:#d0e3f5"><span class="n"><i class="o0"></i></span></div>
<div class="c d" style="left:805px;top:884px;width:87px;height:23px;background:#fde19c"><span class="n"><i class="o0"></i></span></div>
<div class="c d" style="left:893px;top:884px;width:51px;height:23px;background:#d0e3f5"><span class="n"><i class="o0"></i></span></div>
<div class="c d" style="left:945px;top:884px;width:48px;height:23px;background:#d0e3f5"><span class="n"><i class="o0"></i></span></div>
<div class="c d" style="left:994px;top:884px;width:101px;height:23px;background:#fde19c"><span class="n"><i class="o0"></i></span></div>
<div class="c d" style="left:1096px;top:884px;width:86px;height:23px;background:#fde19c"><span class="n"><i class="o0"></i></span></div>
<div class="c d" style="left:1183px;top:884px;width:54px;height:23px;background:#fde19c"><span class="n"><i class="o0"></i></span></div>
<div class="c d" style="left:1238px;top:884px;width:52px;height:23px;background:#fde19c"><span class="n"><i class="o0"></i></span></div>
<div class="c d" style="left:1291px;top:884px;width:86px;height:23px;background:#d0e3f5"><span class="n"><i class="o0"></i></span></div>
<div class="c d" style="left:1378px;top:884px;width:50px;height:23px;background:#d0e3f5"><span class="n"><i class="o0"></i></span></div>
<div class="c d" style="left:1429px;top:884px;width:44px;height:23px;background:#d0e3f5"><span class="n"><i class="o0"></i></span></div>
<div class="c d" style="left:1474px;top:884px;width:101px;height:23px;background:#d0e3f5"><span class="n"><i class="o0"></i></span></div>
<div class="c d" style="left:1576px;top:884px;width:86px;height:23px;background:#fde19c"><span class="n"><i class="o0"></i></span></div>
<div class="c d" style="left:1663px;top:884px;width:54px;height:23px;background:#d0e3f5"><span class="n"><i class="o0"></i></span></div>
<div class="c d" style="left:1718px;top:884px;width:52px;height:23px;background:#d0e3f5"><span class="n"><i class="o0"></i></span></div>
<div class="c u" style="left:1771px;top:884px;width:26px;height:23px;background:#d0e3f5">تن</div>
<div class="c nm" style="left:1798px;top:884px;width:86px;height:23px;background:#d0e3f5">گروه سس</div>
<div class="c nm z" style="left:36px;top:908px;width:79px;height:23px;background:#efefef">تولید</div>
<div class="c d" style="left:116px;top:908px;width:99px;height:23px;background:#efefef"><span class="n"><i class="o0"></i></span></div>
<div class="c d" style="left:216px;top:908px;width:86px;height:23px;background:#fde19c"><span class="n"><i class="o0"></i></span></div>
<div class="c d" style="left:303px;top:908px;width:55px;height:23px;background:#efefef"><span class="n"><i class="o0"></i></span></div>
<div class="c d" style="left:359px;top:908px;width:51px;height:23px;background:#efefef"><span class="n"><i class="o0"></i></span></div>
<div class="c d" style="left:411px;top:908px;width:102px;height:23px;background:#fde19c"><span class="n"><i class="o0"></i></span></div>
<div class="c d" style="left:514px;top:908px;width:86px;height:23px;background:#fde19c"><span class="n"><i class="o0"></i></span></div>
<div class="c d" style="left:601px;top:908px;width:53px;height:23px;background:#fde19c"><span class="n"><i class="o0"></i></span></div>
<div class="c d" style="left:655px;top:908px;width:50px;height:23px;background:#fde19c"><span class="n"><i class="o0"></i></span></div>
<div class="c d" style="left:706px;top:908px;width:98px;height:23px;background:#efefef"><span class="n"><i class="o0"></i></span></div>
<div class="c d" style="left:805px;top:908px;width:87px;height:23px;background:#fde19c"><span class="n"><i class="o0"></i></span></div>
<div class="c d" style="left:893px;top:908px;width:51px;height:23px;background:#efefef"><span class="n"><i class="o0"></i></span></div>
<div class="c d" style="left:945px;top:908px;width:48px;height:23px;background:#efefef"><span class="n"><i class="o0"></i></span></div>
<div class="c d" style="left:994px;top:908px;width:101px;height:23px;background:#fde19c"><span class="n"><i class="o0"></i></span></div>
<div class="c d" style="left:1096px;top:908px;width:86px;height:23px;background:#fde19c"><span class="n"><i class="o0"></i></span></div>
<div class="c d" style="left:1183px;top:908px;width:54px;height:23px;background:#fde19c"><span class="n"><i class="o0"></i></span></div>
<div class="c d" style="left:1238px;top:908px;width:52px;height:23px;background:#fde19c"><span class="n"><i class="o0"></i></span></div>
<div class="c d" style="left:1291px;top:908px;width:86px;height:23px;background:#efefef"><span class="n"><i class="o0"></i></span></div>
<div class="c d" style="left:1378px;top:908px;width:50px;height:23px;background:#efefef"><span class="n"><i class="o0"></i></span></div>
<div class="c d" style="left:1429px;top:908px;width:44px;height:23px;background:#efefef"><span class="n"><i class="o0"></i></span></div>
<div class="c d" style="left:1474px;top:908px;width:101px;height:23px;background:#efefef"><span class="n"><i class="o0"></i></span></div>
<div class="c d" style="left:1576px;top:908px;width:86px;height:23px;background:#fde19c"><span class="n"><i class="o0"></i></span></div>
<div class="c d" style="left:1663px;top:908px;width:54px;height:23px;background:#efefef"><span class="n"><i class="o0"></i></span></div>
<div class="c d" style="left:1718px;top:908px;width:52px;height:23px;background:#efefef"><span class="n"><i class="o0"></i></span></div>
<div class="c u" style="left:1771px;top:908px;width:26px;height:23px;background:#efefef">تن</div>
<div class="c nm" style="left:1798px;top:908px;width:86px;height:23px;background:#efefef">گروه سرکه</div>
<div class="c nm z" style="left:36px;top:932px;width:79px;height:23px;background:#d0e3f5">تولید</div>
<div class="c d" style="left:116px;top:932px;width:99px;height:23px;background:#d0e3f5"><span class="n"><i class="o0"></i></span></div>
<div class="c d" style="left:216px;top:932px;width:86px;height:23px;background:#fde19c"><span class="n"><i class="o0"></i></span></div>
<div class="c d" style="left:303px;top:932px;width:55px;height:23px;background:#d0e3f5"><span class="n"><i class="o0"></i></span></div>
<div class="c d" style="left:359px;top:932px;width:51px;height:23px;background:#d0e3f5"><span class="n"><i class="o0"></i></span></div>
<div class="c d" style="left:411px;top:932px;width:102px;height:23px;background:#fde19c"><span class="n"><i class="o0"></i></span></div>
<div class="c d" style="left:514px;top:932px;width:86px;height:23px;background:#fde19c"><span class="n"><i class="o0"></i></span></div>
<div class="c d" style="left:601px;top:932px;width:53px;height:23px;background:#fde19c"><span class="n"><i class="o0"></i></span></div>
<div class="c d" style="left:655px;top:932px;width:50px;height:23px;background:#fde19c"><span class="n"><i class="o0"></i></span></div>
<div class="c d" style="left:706px;top:932px;width:98px;height:23px;background:#d0e3f5"><span class="n"><i class="o0"></i></span></div>
<div class="c d" style="left:805px;top:932px;width:87px;height:23px;background:#fde19c"><span class="n"><i class="o0"></i></span></div>
<div class="c d" style="left:893px;top:932px;width:51px;height:23px;background:#d0e3f5"><span class="n"><i class="o0"></i></span></div>
<div class="c d" style="left:945px;top:932px;width:48px;height:23px;background:#d0e3f5"><span class="n"><i class="o0"></i></span></div>
<div class="c d" style="left:994px;top:932px;width:101px;height:23px;background:#fde19c"><span class="n"><i class="o0"></i></span></div>
<div class="c d" style="left:1096px;top:932px;width:86px;height:23px;background:#fde19c"><span class="n"><i class="o0"></i></span></div>
<div class="c d" style="left:1183px;top:932px;width:54px;height:23px;background:#fde19c"><span class="n"><i class="o0"></i></span></div>
<div class="c d" style="left:1238px;top:932px;width:52px;height:23px;background:#fde19c"><span class="n"><i class="o0"></i></span></div>
<div class="c d" style="left:1291px;top:932px;width:86px;height:23px;background:#d0e3f5"><span class="n"><i class="o0"></i></span></div>
<div class="c d" style="left:1378px;top:932px;width:50px;height:23px;background:#d0e3f5"><span class="n"><i class="o0"></i></span></div>
<div class="c d" style="left:1429px;top:932px;width:44px;height:23px;background:#d0e3f5"><span class="n"><i class="o0"></i></span></div>
<div class="c d" style="left:1474px;top:932px;width:101px;height:23px;background:#d0e3f5"><span class="n"><i class="o0"></i></span></div>
<div class="c d" style="left:1576px;top:932px;width:86px;height:23px;background:#fde19c"><span class="n"><i class="o0"></i></span></div>
<div class="c d" style="left:1663px;top:932px;width:54px;height:23px;background:#d0e3f5"><span class="n"><i class="o0"></i></span></div>
<div class="c d" style="left:1718px;top:932px;width:52px;height:23px;background:#d0e3f5"><span class="n"><i class="o0"></i></span></div>
<div class="c u" style="left:1771px;top:932px;width:26px;height:23px;background:#d0e3f5">تن</div>
<div class="c nm" style="left:1798px;top:932px;width:86px;height:23px;background:#d0e3f5">گروه رب</div>
<div class="c nm z" style="left:36px;top:956px;width:79px;height:24px;background:#efefef">تولید</div>
<div class="c d" style="left:116px;top:956px;width:99px;height:24px;background:#efefef"><span class="n"><i class="o0"></i></span></div>
<div class="c d" style="left:216px;top:956px;width:86px;height:24px;background:#fde19c"><span class="n"><i class="o0"></i></span></div>
<div class="c d" style="left:303px;top:956px;width:55px;height:24px;background:#efefef"><span class="n"><i class="o0"></i></span></div>
<div class="c d" style="left:359px;top:956px;width:51px;height:24px;background:#efefef"><span class="n"><i class="o0"></i></span></div>
<div class="c d" style="left:411px;top:956px;width:102px;height:24px;background:#fde19c"><span class="n"><i class="o0"></i></span></div>
<div class="c d" style="left:514px;top:956px;width:86px;height:24px;background:#fde19c"><span class="n"><i class="o0"></i></span></div>
<div class="c d" style="left:601px;top:956px;width:53px;height:24px;background:#fde19c"><span class="n"><i class="o0"></i></span></div>
<div class="c d" style="left:655px;top:956px;width:50px;height:24px;background:#fde19c"><span class="n"><i class="o0"></i></span></div>
<div class="c d" style="left:706px;top:956px;width:98px;height:24px;background:#efefef"><span class="n"><i class="o0"></i></span></div>
<div class="c d" style="left:805px;top:956px;width:87px;height:24px;background:#fde19c"><span class="n"><i class="o0"></i></span></div>
<div class="c d" style="left:893px;top:956px;width:51px;height:24px;background:#efefef"><span class="n"><i class="o0"></i></span></div>
<div class="c d" style="left:945px;top:956px;width:48px;height:24px;background:#efefef"><span class="n"><i class="o0"></i></span></div>
<div class="c d" style="left:994px;top:956px;width:101px;height:24px;background:#fde19c"><span class="n"><i class="o0"></i></span></div>
<div class="c d" style="left:1096px;top:956px;width:86px;height:24px;background:#fde19c"><span class="n"><i class="o0"></i></span></div>
<div class="c d" style="left:1183px;top:956px;width:54px;height:24px;background:#fde19c"><span class="n"><i class="o0"></i></span></div>
<div class="c d" style="left:1238px;top:956px;width:52px;height:24px;background:#fde19c"><span class="n"><i class="o0"></i></span></div>
<div class="c d" style="left:1291px;top:956px;width:86px;height:24px;background:#efefef"><span class="n"><i class="o0"></i></span></div>
<div class="c d" style="left:1378px;top:956px;width:50px;height:24px;background:#efefef"><span class="n"><i class="o0"></i></span></div>
<div class="c d" style="left:1429px;top:956px;width:44px;height:24px;background:#efefef"><span class="n"><i class="o0"></i></span></div>
<div class="c d" style="left:1474px;top:956px;width:101px;height:24px;background:#efefef"><span class="n"><i class="o0"></i></span></div>
<div class="c d" style="left:1576px;top:956px;width:86px;height:24px;background:#fde19c"><span class="n"><i class="o0"></i></span></div>
<div class="c d" style="left:1663px;top:956px;width:54px;height:24px;background:#efefef"><span class="n"><i class="o0"></i></span></div>
<div class="c d" style="left:1718px;top:956px;width:52px;height:24px;background:#efefef"><span class="n"><i class="o0"></i></span></div>
<div class="c u" style="left:1771px;top:956px;width:26px;height:24px;background:#efefef">تن</div>
<div class="c nm" style="left:1798px;top:956px;width:86px;height:24px;background:#efefef">گروه رب انار</div>
<div class="c nm z" style="left:36px;top:981px;width:79px;height:40px;background:#d0e3f5">تولید</div>
<div class="c d" style="left:116px;top:981px;width:99px;height:40px;background:#d0e3f5"><span class="n"><i class="o0"></i></span></div>
<div class="c d" style="left:216px;top:981px;width:86px;height:40px;background:#fde19c"><span class="n"><i class="o0"></i></span></div>
<div class="c d" style="left:303px;top:981px;width:55px;height:40px;background:#d0e3f5"><span class="n"><i class="o0"></i></span></div>
<div class="c d" style="left:359px;top:981px;width:51px;height:40px;background:#d0e3f5"><span class="n"><i class="o0"></i></span></div>
<div class="c d" style="left:411px;top:981px;width:102px;height:40px;background:#fde19c"><span class="n"><i class="o0"></i></span></div>
<div class="c d" style="left:514px;top:981px;width:86px;height:40px;background:#fde19c"><span class="n"><i class="o0"></i></span></div>
<div class="c d" style="left:601px;top:981px;width:53px;height:40px;background:#fde19c"><span class="n"><i class="o0"></i></span></div>
<div class="c d" style="left:655px;top:981px;width:50px;height:40px;background:#fde19c"><span class="n"><i class="o0"></i></span></div>
<div class="c d" style="left:706px;top:981px;width:98px;height:40px;background:#d0e3f5"><span class="n"><i class="o0"></i></span></div>
<div class="c d" style="left:805px;top:981px;width:87px;height:40px;background:#fde19c"><span class="n"><i class="o0"></i></span></div>
<div class="c d" style="left:893px;top:981px;width:51px;height:40px;background:#d0e3f5"><span class="n"><i class="o0"></i></span></div>
<div class="c d" style="left:945px;top:981px;width:48px;height:40px;background:#d0e3f5"><span class="n"><i class="o0"></i></span></div>
<div class="c d" style="left:994px;top:981px;width:101px;height:40px;background:#fde19c"><span class="n"><i class="o0"></i></span></div>
<div class="c d" style="left:1096px;top:981px;width:86px;height:40px;background:#fde19c"><span class="n"><i class="o0"></i></span></div>
<div class="c d" style="left:1183px;top:981px;width:54px;height:40px;background:#fde19c"><span class="n"><i class="o0"></i></span></div>
<div class="c d" style="left:1238px;top:981px;width:52px;height:40px;background:#fde19c"><span class="n"><i class="o0"></i></span></div>
<div class="c d" style="left:1291px;top:981px;width:86px;height:40px;background:#d0e3f5"><span class="n"><i class="o0"></i></span></div>
<div class="c d" style="left:1378px;top:981px;width:50px;height:40px;background:#d0e3f5"><span class="n"><i class="o0"></i></span></div>
<div class="c d" style="left:1429px;top:981px;width:44px;height:40px;background:#d0e3f5"><span class="n"><i class="o0"></i></span></div>
<div class="c d" style="left:1474px;top:981px;width:101px;height:40px;background:#d0e3f5"><span class="n"><i class="o0"></i></span></div>
<div class="c d" style="left:1576px;top:981px;width:86px;height:40px;background:#fde19c"><span class="n"><i class="o0"></i></span></div>
<div class="c d" style="left:1663px;top:981px;width:54px;height:40px;background:#d0e3f5"><span class="n"><i class="o0"></i></span></div>
<div class="c d" style="left:1718px;top:981px;width:52px;height:40px;background:#d0e3f5"><span class="n"><i class="o0"></i></span></div>
<div class="c u" style="left:1771px;top:981px;width:26px;height:40px;background:#d0e3f5">تن</div>
<div class="c nm" style="left:1798px;top:981px;width:86px;height:40px;background:#d0e3f5">انواع محصولات<br>بازرگاني</div>
<div class="c d" style="left:36px;top:1022px;width:79px;height:40px;background:#fde19c"></div>
<div class="c d" style="left:116px;top:1022px;width:99px;height:40px;background:#fde19c"><span class="n"><i class="o0"></i></span></div>
<div class="c d" style="left:216px;top:1022px;width:86px;height:40px;background:#fde19c"></div>
<div class="c d" style="left:303px;top:1022px;width:55px;height:40px;background:#fde19c"><span class="n"><i class="o0"></i></span></div>
<div class="c d" style="left:359px;top:1022px;width:51px;height:40px;background:#fde19c"><span class="n"><i class="o0"></i></span></div>
<div class="c d" style="left:411px;top:1022px;width:102px;height:40px;background:#fde19c"><span class="n"><i class="o0"></i></span></div>
<div class="c d" style="left:514px;top:1022px;width:86px;height:40px;background:#fde19c"></div>
<div class="c d" style="left:601px;top:1022px;width:53px;height:40px;background:#fde19c"><span class="n"><i class="o0"></i></span></div>
<div class="c d" style="left:655px;top:1022px;width:50px;height:40px;background:#fde19c"><span class="n"><i class="o0"></i></span></div>
<div class="c d" style="left:706px;top:1022px;width:98px;height:40px;background:#fde19c"><span class="n"><i class="o0"></i></span></div>
<div class="c d" style="left:805px;top:1022px;width:87px;height:40px;background:#fde19c"></div>
<div class="c d" style="left:893px;top:1022px;width:51px;height:40px;background:#fde19c"><span class="n"><i class="o0"></i></span></div>
<div class="c d" style="left:945px;top:1022px;width:48px;height:40px;background:#fde19c"><span class="n"><i class="o0"></i></span></div>
<div class="c d" style="left:994px;top:1022px;width:101px;height:40px;background:#fde19c"><span class="n"><i class="o0"></i></span></div>
<div class="c d" style="left:1096px;top:1022px;width:86px;height:40px;background:#fde19c"></div>
<div class="c d" style="left:1183px;top:1022px;width:54px;height:40px;background:#fde19c"><span class="n"><i class="o0"></i></span></div>
<div class="c d" style="left:1238px;top:1022px;width:52px;height:40px;background:#fde19c"><span class="n"><i class="o0"></i></span></div>
<div class="c d" style="left:1291px;top:1022px;width:86px;height:40px;background:#fde19c"><span class="n"><i class="o0"></i></span></div>
<div class="c d" style="left:1378px;top:1022px;width:50px;height:40px;background:#fde19c"><span class="n"><i class="o0"></i></span></div>
<div class="c d" style="left:1429px;top:1022px;width:44px;height:40px;background:#fde19c"><span class="n"><i class="o0"></i></span></div>
<div class="c d" style="left:1474px;top:1022px;width:101px;height:40px;background:#fde19c"><span class="n"><i class="o0"></i></span></div>
<div class="c d" style="left:1576px;top:1022px;width:86px;height:40px;background:#fde19c"></div>
<div class="c d" style="left:1663px;top:1022px;width:54px;height:40px;background:#fde19c"><span class="n"><i class="o0"></i></span></div>
<div class="c d" style="left:1718px;top:1022px;width:52px;height:40px;background:#fde19c"><span class="n"><i class="o0"></i></span></div>
<div class="c d" style="left:1771px;top:1022px;width:26px;height:40px;background:#fde19c"></div>
<div class="c nm" style="left:1798px;top:1022px;width:86px;height:40px;background:#fde19c">جمع درآمد ارائه<br>خدمات</div>
<div class="c " style="left:36px;top:1063px;width:79px;height:41px;background:#d3d3d3"></div>
<div class="c " style="left:116px;top:1063px;width:99px;height:41px;background:#d3d3d3"></div>
<div class="c " style="left:216px;top:1063px;width:86px;height:41px;background:#d3d3d3"></div>
<div class="c " style="left:303px;top:1063px;width:55px;height:41px;background:#d3d3d3"></div>
<div class="c " style="left:359px;top:1063px;width:51px;height:41px;background:#d3d3d3"></div>
<div class="c " style="left:411px;top:1063px;width:102px;height:41px;background:#d3d3d3"></div>
<div class="c " style="left:514px;top:1063px;width:86px;height:41px;background:#d3d3d3"></div>
<div class="c " style="left:601px;top:1063px;width:53px;height:41px;background:#d3d3d3"></div>
<div class="c " style="left:655px;top:1063px;width:50px;height:41px;background:#d3d3d3"></div>
<div class="c " style="left:706px;top:1063px;width:98px;height:41px;background:#d3d3d3"></div>
<div class="c " style="left:805px;top:1063px;width:87px;height:41px;background:#d3d3d3"></div>
<div class="c " style="left:893px;top:1063px;width:51px;height:41px;background:#d3d3d3"></div>
<div class="c " style="left:945px;top:1063px;width:48px;height:41px;background:#d3d3d3"></div>
<div class="c " style="left:994px;top:1063px;width:101px;height:41px;background:#d3d3d3"></div>
<div class="c " style="left:1096px;top:1063px;width:86px;height:41px;background:#d3d3d3"></div>
<div class="c " style="left:1183px;top:1063px;width:54px;height:41px;background:#d3d3d3"></div>
<div class="c " style="left:1238px;top:1063px;width:52px;height:41px;background:#d3d3d3"></div>
<div class="c " style="left:1291px;top:1063px;width:86px;height:41px;background:#d3d3d3"></div>
<div class="c " style="left:1378px;top:1063px;width:50px;height:41px;background:#d3d3d3"></div>
<div class="c " style="left:1429px;top:1063px;width:44px;height:41px;background:#d3d3d3"></div>
<div class="c " style="left:1474px;top:1063px;width:101px;height:41px;background:#d3d3d3"></div>
<div class="c " style="left:1576px;top:1063px;width:86px;height:41px;background:#d3d3d3"></div>
<div class="c " style="left:1663px;top:1063px;width:54px;height:41px;background:#d3d3d3"></div>
<div class="c " style="left:1718px;top:1063px;width:52px;height:41px;background:#d3d3d3"></div>
<div class="c " style="left:1771px;top:1063px;width:26px;height:41px;background:#d3d3d3"></div>
<div class="c nm g" style="left:1798px;top:1063px;width:86px;height:41px;background:#d3d3d3">برگشت از<br>فروش:</div>
<div class="a wm" style="left:654px;top:482px;width:600px;height:110px;transform:rotate(-45deg) scale(1.03);">@Codal360.ir</div>
</body></html>
